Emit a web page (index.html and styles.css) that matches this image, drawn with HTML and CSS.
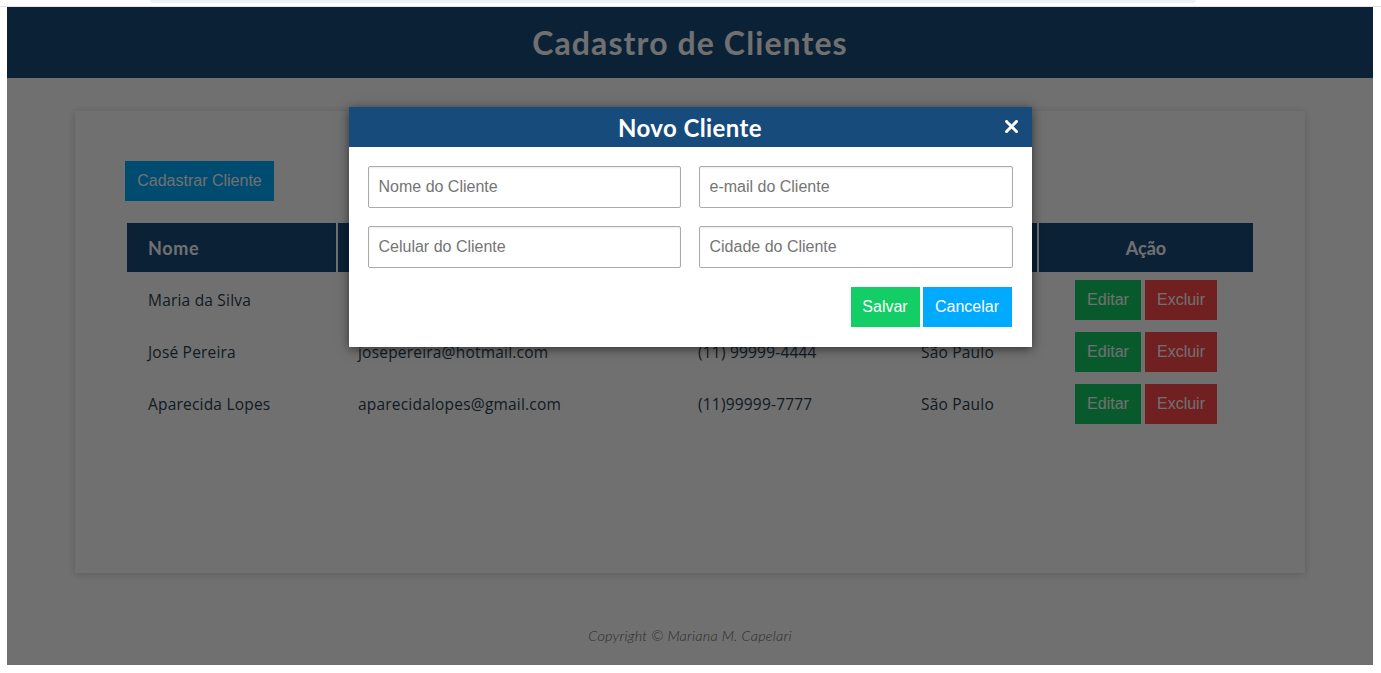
FILE: index.html
```html
<!DOCTYPE html>
<html lang="pt-BR">
<head>
<meta charset="utf-8">
<title>Cadastro de Clientes</title>
<link rel="stylesheet" href="styles.css">
</head>
<body>
<div class="chrome"><div class="chrome-bar"></div></div>
<div class="viewport">
  <header class="app-header"><h1>Cadastro de Clientes</h1></header>
  <main class="main">
    <section class="card">
      <button class="btn btn-primary">Cadastrar Cliente</button>
      <table class="clients">
        <colgroup>
          <col class="c-nome"><col class="c-email"><col class="c-cel"><col class="c-cid"><col class="c-acao">
        </colgroup>
        <thead>
          <tr><th>Nome</th><th>E-mail</th><th>Celular</th><th>Cidade</th><th class="center">Ação</th></tr>
        </thead>
        <tbody>
          <tr><td>Maria da Silva</td><td>mariadasilva@gmail.com</td><td>(11) 99999-9999</td><td>São Paulo</td><td class="center"><button class="btn btn-success">Editar</button><button class="btn btn-danger">Excluir</button></td></tr>
          <tr><td>José Pereira</td><td>josepereira@hotmail.com</td><td>(11) 99999-4444</td><td>São Paulo</td><td class="center"><button class="btn btn-success">Editar</button><button class="btn btn-danger">Excluir</button></td></tr>
          <tr><td>Aparecida Lopes</td><td>aparecidalopes@gmail.com</td><td>(11)99999-7777</td><td>São Paulo</td><td class="center"><button class="btn btn-success">Editar</button><button class="btn btn-danger">Excluir</button></td></tr>
        </tbody>
      </table>
    </section>
  </main>
  <footer class="footer">Copyright © Mariana M. Capelari</footer>

  <div class="overlay">
    <div class="modal">
      <div class="modal-header">
        <h2>Novo Cliente</h2>
        <button class="close" aria-label="Fechar">
          <svg width="13" height="13" viewBox="0 0 13 13"><path d="M1.5 1.5 L11.5 11.5 M11.5 1.5 L1.5 11.5" stroke="#fff" stroke-width="3" stroke-linecap="square"/></svg>
        </button>
      </div>
      <div class="modal-body">
        <div class="form-grid">
          <input type="text" placeholder="Nome do Cliente">
          <input type="text" placeholder="e-mail do Cliente">
          <input type="text" placeholder="Celular do Cliente">
          <input type="text" placeholder="Cidade do Cliente">
        </div>
        <div class="modal-actions">
          <button class="btn btn-success lg">Salvar</button>
          <button class="btn btn-info lg">Cancelar</button>
        </div>
      </div>
    </div>
  </div>
</div>
</body>
</html>
```

FILE: styles.css
```css
* { box-sizing: border-box; }
html, body { margin: 0; padding: 0; background: #fff; }
body { font-family: "Lato", "Liberation Sans", sans-serif; color: #2c3e50; }

.chrome { height: 7px; border-bottom: 1px solid #e4e4e4; }
.chrome-bar { margin-left: 150px; width: 1046px; height: 3px; background: #eef0f3; border-radius: 0 0 6px 6px; }

.viewport {
  position: relative;
  margin: 0 8px 0 7px;
  width: 1366px;
  height: 658px;
  background: #fff;
  display: flex;
  flex-direction: column;
}

.app-header {
  height: 71px;
  background: #174b7b;
  display: flex;
  align-items: center;
  justify-content: center;
}
.app-header h1 {
  margin: 0;
  color: #fff;
  font-family: "Lato", sans-serif;
  font-weight: 700;
  font-size: 32px;
  letter-spacing: 1.1px;
}

.main { padding: 33px 68px 0; }
.card {
  height: 462px;
  padding: 50px 50px;
  background: #fff;
  box-shadow: 0 1px 8px rgba(0,0,0,0.18);
}

.btn {
  border: 0;
  color: #fff;
  font-family: "Liberation Sans", Arial, sans-serif;
  font-size: 16px;
  height: 40px;
  padding: 0 12px;
  cursor: pointer;
}
.btn-primary { background: #00aaff; width: 149px; padding: 0; }
.btn-success { background: #13ce66; }
.btn-danger { background: #ff4949; }
.btn-info { background: #00aaff; }

.clients {
  margin-top: 22px;
  width: 100%;
  border-collapse: separate;
  border-spacing: 2px 0;
  table-layout: fixed;
}
.c-nome { width: 209px; }
.c-email { width: 337px; }
.c-cel { width: 221px; }
.c-cid { width: 137px; }
.c-acao { width: 214px; }

.clients th {
  background: #174b7b;
  background-clip: padding-box;
  border-bottom: 2px solid transparent;
  color: #fff;
  text-align: left;
  font-weight: 700;
  font-size: 18px;
  letter-spacing: 0.7px;
  height: 51px;
  padding: 0 20px 0 21px;
}
.clients td {
  height: 52px;
  padding: 0 10px 0 21px;
  font-family: "Open Sans", sans-serif;
  font-size: 15.5px;
  letter-spacing: 0.2px;
  color: #2c3e50;
  white-space: nowrap;
}
.clients td:nth-child(2) { padding-left: 20px; }
.clients .center { text-align: center; padding: 0; letter-spacing: 0; }
.clients td.center .btn + .btn { margin-left: 4px; }
.clients td.center .btn-success { width: 66px; padding: 0; }
.clients td.center .btn-danger { width: 72px; padding: 0; }

.footer {
  margin-top: 54px;
  text-align: center;
  font-style: italic;
  font-weight: 300;
  font-size: 14.5px;
  letter-spacing: 0.2px;
  color: #666;
}

.overlay {
  position: absolute;
  inset: 0;
  background: rgba(0,0,0,0.56);
  display: flex;
  justify-content: center;
  align-items: flex-start;
  padding-top: 100px;
}
.modal {
  width: 683px;
  background: #fff;
  box-shadow: 0 2px 10px rgba(0,0,0,0.55);
}
.modal-header {
  position: relative;
  height: 40px;
  background: #174b7b;
  display: flex;
  align-items: center;
  justify-content: center;
}
.modal-header h2 {
  margin: 0;
  color: #fff;
  font-family: "Lato", sans-serif;
  font-weight: 700;
  font-size: 24px;
  letter-spacing: 0.4px;
}
.close {
  position: absolute;
  right: 14px;
  top: 13px;
  width: 13px;
  height: 13px;
  padding: 0;
  border: 0;
  background: none;
  display: flex;
}
.modal-body { padding: 19px 19px 20px; }
.form-grid {
  display: grid;
  grid-template-columns: 313px 314px;
  column-gap: 18px;
  row-gap: 18px;
}
.form-grid input {
  height: 42px;
  border: 1px solid #ababab;
  border-radius: 2px;
  box-shadow: inset 0 1px 2px rgba(0,0,0,0.08);
  padding: 0 10px;
  font-family: "Liberation Sans", Arial, sans-serif;
  font-size: 16px;
  color: #333;
}
.form-grid input::placeholder { color: #757575; }
.modal-actions {
  margin-top: 19px;
  padding-right: 1px;
  display: flex;
  justify-content: flex-end;
  gap: 3px;
}
.btn.lg { height: 40px; padding: 0 12px; }
.modal-actions .btn-success { width: 69px; padding: 0; }
.modal-actions .btn-info { width: 89px; padding: 0; }
```
